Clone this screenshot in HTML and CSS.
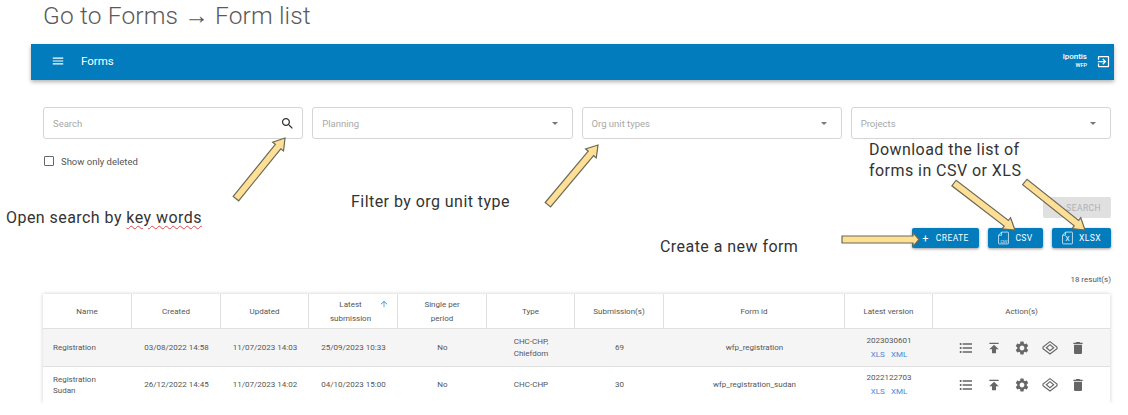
FILE: index.html
```html
<!DOCTYPE html>
<html lang="en">
<head>
    <meta charset="UTF-8">
    <meta name="viewport" content="width=device-width, initial-scale=1.0">
    <title>Go to Forms - Form list</title>
    <link rel="stylesheet" href="styles.css">
</head>
<body>

<svg class="sprite" width="0" height="0">
    <symbol id="i-menu" viewBox="0 0 24 24"><path d="M3 18h18v-2H3v2zm0-5h18v-2H3v2zm0-7v2h18V6H3z"/></symbol>
    <symbol id="i-exit" viewBox="0 0 24 24"><path d="M10.09 15.59L11.5 17l5-5-5-5-1.41 1.41L12.67 11H3v2h9.67l-2.58 2.59zM19 3H5c-1.11 0-2 .9-2 2v4h2V5h14v14H5v-4H3v4c0 1.1.89 2 2 2h14c1.1 0 2-.9 2-2V5c0-1.1-.9-2-2-2z"/></symbol>
    <symbol id="i-search" viewBox="0 0 24 24"><path d="M15.5 14h-.79l-.28-.27C15.41 12.59 16 11.11 16 9.5 16 5.91 13.09 3 9.5 3S3 5.91 3 9.5 5.91 16 9.5 16c1.61 0 3.09-.59 4.23-1.57l.27.28v.79l5 4.99L20.49 19l-4.99-5zm-6 0C7.01 14 5 11.99 5 9.5S7.01 5 9.5 5 14 7.01 14 9.5 11.99 14 9.5 14z"/></symbol>
    <symbol id="i-list" viewBox="0 0 24 24"><path d="M4 10.5c-.83 0-1.5.67-1.5 1.5s.67 1.5 1.5 1.5 1.5-.67 1.5-1.5-.67-1.5-1.5-1.5zm0-6c-.83 0-1.5.67-1.5 1.5S3.17 7.5 4 7.5 5.5 6.83 5.5 6 4.83 4.5 4 4.5zm0 12c-.83 0-1.5.68-1.5 1.5s.68 1.5 1.5 1.5 1.5-.68 1.5-1.5-.67-1.5-1.5-1.5zM7 19h14v-2H7v2zm0-6h14v-2H7v2zm0-8v2h14V5H7z"/></symbol>
    <symbol id="i-publish" viewBox="0 0 24 24"><path d="M5 4v2h14V4H5zm0 10h4v6h6v-6h4l-7-7-7 7z"/></symbol>
    <symbol id="i-gear" viewBox="0 0 24 24"><path d="M19.14 12.94c.04-.3.06-.61.06-.94 0-.32-.02-.64-.07-.94l2.03-1.58c.18-.14.23-.41.12-.61l-1.92-3.32c-.12-.22-.37-.29-.59-.22l-2.39.96c-.5-.38-1.03-.7-1.62-.94l-.36-2.54c-.04-.24-.24-.41-.48-.41h-3.84c-.24 0-.43.17-.47.41l-.36 2.54c-.59.24-1.13.57-1.62.94l-2.39-.96c-.22-.08-.47 0-.59.22L2.74 8.87c-.12.21-.08.47.12.61l2.03 1.58c-.05.3-.09.63-.09.94s.02.64.07.94l-2.03 1.58c-.18.14-.23.41-.12.61l1.92 3.32c.12.22.37.29.59.22l2.39-.96c.5.38 1.03.7 1.62.94l.36 2.54c.05.24.24.41.48.41h3.84c.24 0 .44-.17.47-.41l.36-2.54c.59-.24 1.13-.56 1.62-.94l2.39.96c.22.08.47 0 .59-.22l1.92-3.32c.12-.22.07-.47-.12-.61l-2.01-1.58zM12 15.6c-1.98 0-3.6-1.62-3.6-3.6s1.62-3.6 3.6-3.6 3.6 1.62 3.6 3.6-1.62 3.6-3.6 3.6z"/></symbol>
    <symbol id="i-layers" viewBox="0 0 24 24"><path d="M12 2.5L22.5 10.5V13L12 21L1.5 13V10.5ZM12 7L17.5 11.7L12 16L6.5 11.7Z" fill="none" stroke="currentColor" stroke-width="1.7"/></symbol>
    <symbol id="i-trash" viewBox="0 0 24 24"><path d="M6 19c0 1.1.9 2 2 2h8c1.1 0 2-.9 2-2V7H6v12zM19 4h-3.5l-1-1h-5l-1 1H5v2h14V4z"/></symbol>
    <symbol id="i-up" viewBox="0 0 24 24"><path d="M4 12l1.41 1.41L11 7.83V20h2V7.83l5.58 5.59L20 12l-8-8-8 8z"/></symbol>
    <symbol id="i-file" viewBox="0 0 14 17"><path d="M4.5 1h8a.8.8 0 0 1 .8.8v13.4a.8.8 0 0 1-.8.8h-11a.8.8 0 0 1-.8-.8V5zM4.5 1v4H.7" fill="none" stroke="currentColor" stroke-width=".9"/></symbol>
</svg>

<h1 class="page-title">Go to Forms → Form list</h1>

<div class="app">
    <header class="appbar">
        <svg class="menu-icon"><use href="#i-menu"/></svg>
        <span class="appbar-title">Forms</span>
        <div class="user">
            <span class="user-name">lpontis</span>
            <span class="user-org">WFP</span>
        </div>
        <svg class="exit-icon"><use href="#i-exit"/></svg>
    </header>

    <main class="content">
        <div class="filters">
            <div class="field"><span>Search</span><svg class="search-icon"><use href="#i-search"/></svg></div>
            <div class="field"><span>Planning</span><i class="caret"></i></div>
            <div class="field"><span>Org unit types</span><i class="caret"></i></div>
            <div class="field"><span>Projects</span><i class="caret"></i></div>
        </div>

        <label class="deleted"><i class="checkbox"></i>Show only deleted</label>

        <div class="search-row"><button class="btn-disabled">SEARCH</button></div>

        <div class="actions">
            <button class="btn btn-create"><span class="plus">+</span>CREATE</button>
            <button class="btn btn-csv"><span class="file-icon"><svg><use href="#i-file"/></svg><b>CSV</b></span>CSV</button>
            <button class="btn btn-xlsx"><span class="file-icon"><svg><use href="#i-file"/></svg><b class="big">X</b></span>XLSX</button>
        </div>

        <div class="results">18 result(s)</div>

        <div class="table">
            <div class="row head">
                <div>Name</div>
                <div>Created</div>
                <div>Updated</div>
                <div class="sorted">Latest<br>submission<svg class="sort-icon"><use href="#i-up"/></svg></div>
                <div class="two-lines">Single per<br>period</div>
                <div>Type</div>
                <div>Submission(s)</div>
                <div>Form id</div>
                <div>Latest version</div>
                <div>Action(s)</div>
            </div>
            <div class="row odd">
                <div class="name">Registration</div>
                <div>03/08/2022 14:58</div>
                <div>11/07/2023 14:03</div>
                <div>25/09/2023 10:33</div>
                <div>No</div>
                <div>CHC-CHP,<br>Chiefdom</div>
                <div>69</div>
                <div>wfp_registration</div>
                <div class="version">2023030601<span><a>XLS</a><a>XML</a></span></div>
                <div class="icons">
                    <svg><use href="#i-list"/></svg>
                    <svg><use href="#i-publish"/></svg>
                    <svg><use href="#i-gear"/></svg>
                    <svg><use href="#i-layers"/></svg>
                    <svg><use href="#i-trash"/></svg>
                </div>
            </div>
            <div class="row">
                <div class="name">Registration<br>Sudan</div>
                <div>26/12/2022 14:45</div>
                <div>11/07/2023 14:02</div>
                <div>04/10/2023 15:00</div>
                <div>No</div>
                <div>CHC-CHP</div>
                <div>30</div>
                <div>wfp_registration_sudan</div>
                <div class="version">2022122703<span><a>XLS</a><a>XML</a></span></div>
                <div class="icons">
                    <svg><use href="#i-list"/></svg>
                    <svg><use href="#i-publish"/></svg>
                    <svg><use href="#i-gear"/></svg>
                    <svg><use href="#i-layers"/></svg>
                    <svg><use href="#i-trash"/></svg>
                </div>
            </div>
        </div>
    </main>
</div>

<!-- notes and arrows drawn over the screen capture -->
<p class="note note-search">Open search by <span class="squiggle">key words</span></p>
<p class="note note-filter">Filter by org unit type</p>
<p class="note note-download">Download the list of<br>forms in CSV or XLS</p>
<p class="note note-create">Create a new form</p>

<svg class="arrows" width="1128" height="415">
    <g transform="translate(285 138) rotate(-51)"><polygon points="0,0 -11,-7 -11,-3.5 -78,-3.5 -78,3.5 -11,3.5 -11,7"/></g>
    <g transform="translate(598 145) rotate(-50)"><polygon points="0,0 -11,-7 -11,-3.5 -78,-3.5 -78,3.5 -11,3.5 -11,7"/></g>
    <g transform="translate(1015 230) rotate(37.6)"><polygon points="0,0 -11,-7 -11,-3.5 -77,-3.5 -77,3.5 -11,3.5 -11,7"/></g>
    <g transform="translate(1085 230) rotate(38.6)"><polygon points="0,0 -11,-7 -11,-3.5 -77,-3.5 -77,3.5 -11,3.5 -11,7"/></g>
    <g transform="translate(919 239.5)"><polygon points="0,0 -6,-7 -6,-3.5 -77,-3.5 -77,3.5 -6,3.5 -6,7"/></g>
</svg>

</body>
</html>
```

FILE: styles.css
```css
* {
    box-sizing: border-box;
}

body {
    position: relative;
    width: 1128px;
    height: 415px;
    margin: 0;
    overflow: hidden;
    background: #fff;
    font-family: Roboto, Arial, sans-serif;
    color: #555;
}

.sprite {
    position: absolute;
}

svg {
    fill: currentColor;
}

.page-title {
    height: 32px;
    margin: 0 0 12px 43px;
    font-size: 24.5px;
    font-weight: 300;
    line-height: 32px;
    letter-spacing: 0.15px;
    color: #5a5a5a;
}

.app {
    margin: 0 14px 0 31px;
}

.appbar {
    display: flex;
    align-items: center;
    height: 36px;
    padding: 0 3px 2px 20px;
    background: #027cbd;
    color: #fff;
    box-shadow: 0 2px 4px rgba(0, 0, 0, 0.3);
}

.menu-icon {
    width: 14px;
    height: 14px;
}

.appbar-title {
    margin-left: 16px;
    font-size: 11.5px;
}

.user {
    display: flex;
    flex-direction: column;
    align-items: flex-end;
    margin-left: auto;
    line-height: 9px;
    font-weight: 500;
}

.user-name {
    font-size: 8px;
}

.user-org {
    font-size: 5.5px;
}

.exit-icon {
    width: 15px;
    height: 15px;
    margin-left: 9px;
}

.content {
    padding: 27px 3px 0 12px;
}

.filters {
    display: grid;
    grid-template-columns: repeat(4, 1fr);
    gap: 9px;
}

.field {
    display: flex;
    align-items: center;
    justify-content: space-between;
    height: 32px;
    padding: 0 7px 0 9px;
    border: 1px solid #d5d5d5;
    border-radius: 3px;
    font-size: 9.5px;
    color: #a8a8a8;
}

.search-icon {
    width: 15px;
    height: 15px;
    color: #333;
}

.caret {
    width: 0;
    height: 0;
    margin-right: 7px;
    border-left: 3.5px solid transparent;
    border-right: 3.5px solid transparent;
    border-top: 3.5px solid #777;
}

.deleted {
    display: flex;
    align-items: center;
    height: 16px;
    margin-top: 14px;
    font-size: 9.5px;
    color: #555;
}

.checkbox {
    width: 10px;
    height: 10px;
    margin: 0 7px 0 1px;
    border: 1px solid #666;
    border-radius: 1px;
}

.search-row {
    display: flex;
    justify-content: flex-end;
    margin-top: 28px;
}

.btn-disabled {
    width: 68px;
    height: 21px;
    padding: 0 10px 0 0;
    border: none;
    border-radius: 2px;
    background: #e0e0e0;
    font: 400 8.5px Roboto, Arial, sans-serif;
    letter-spacing: 0.4px;
    text-align: right;
    color: #b0b0b0;
}

.actions {
    display: flex;
    justify-content: flex-end;
    gap: 9px;
    margin-top: 10px;
}

.btn {
    display: flex;
    align-items: center;
    justify-content: center;
    height: 20px;
    padding: 0;
    border: none;
    border-radius: 2px;
    background: #027cbd;
    box-shadow: 0 1px 3px rgba(0, 0, 0, 0.4);
    font: 400 8.5px Roboto, Arial, sans-serif;
    letter-spacing: 0.4px;
    color: #fff;
}

.btn-create {
    width: 67px;
}

.btn-csv {
    width: 55px;
}

.btn-xlsx {
    width: 59px;
}

.plus {
    margin-right: 7px;
    font-size: 11px;
    font-weight: 400;
}

.file-icon {
    position: relative;
    width: 11px;
    height: 14px;
    margin-right: 6px;
}

.file-icon svg {
    display: block;
    width: 11px;
    height: 14px;
}

.file-icon b {
    position: absolute;
    left: 0;
    right: 0;
    bottom: 1px;
    font-size: 3.5px;
    font-weight: 400;
    letter-spacing: 0;
    text-align: center;
}

.file-icon b.big {
    bottom: 2px;
    font-size: 7px;
}

.results {
    height: 12px;
    margin-top: 26px;
    font-size: 8px;
    line-height: 12px;
    text-align: right;
}

.table {
    margin: 8px 1px 0 0;
    box-shadow: 0 0 4px rgba(0, 0, 0, 0.2);
    clip-path: inset(-5px -5px 0 -5px);
    font-size: 8px;
    color: #555;
}

.row {
    display: grid;
    grid-template-columns: 89px 89px 88px 89px 89px 88px 89px 181px 88px 177px;
    height: 38px;
    border-bottom: 1px solid #e0e0e0;
}

.row:last-child {
    height: 36px;
    border-bottom: none;
}

.row > div {
    display: flex;
    flex-direction: column;
    align-items: center;
    justify-content: center;
    line-height: 11.5px;
    text-align: center;
}

.head {
    height: 35px;
}

.head > div {
    display: block;
    position: relative;
    height: 100%;
    padding-top: 12px;
    border-right: 1px solid #e0e0e0;
}

.head > div:last-child {
    border-right: none;
}

.head > .two-lines {
    padding-top: 4px;
    line-height: 14px;
}

.head > .sorted {
    padding: 4px 5px 0 0;
    line-height: 14px;
}

.sort-icon {
    position: absolute;
    top: 5px;
    right: 8px;
    width: 10px;
    height: 10px;
    color: #3f9fdc;
}

.odd {
    background: #f5f5f5;
}

.row > .name {
    align-items: flex-start;
    padding-left: 10px;
    text-align: left;
}

.row > .version {
    line-height: 14px;
}

.version span {
    display: flex;
    gap: 6px;
}

.version a {
    color: #4a86d8;
}

.row > .icons {
    flex-direction: row;
    gap: 12px;
}

.icons svg {
    width: 16px;
    height: 16px;
    color: #666;
}

.note {
    position: absolute;
    margin: 0;
    font-size: 16px;
    line-height: 21px;
    color: #333;
    letter-spacing: 0.45px;
}

.note-search {
    left: 6px;
    top: 207px;
}

.note-filter {
    left: 351px;
    top: 191px;
}

.note-download {
    left: 869px;
    top: 139px;
}

.note-create {
    left: 660px;
    top: 236px;
}

.squiggle {
    text-decoration: underline wavy #e0474c 1px;
    text-underline-offset: 2px;
}

.arrows {
    position: absolute;
    top: 0;
    left: 0;
    pointer-events: none;
}

.arrows polygon {
    fill: #ffdf96;
    stroke: #6a6a58;
    stroke-width: 1.2;
}
```
